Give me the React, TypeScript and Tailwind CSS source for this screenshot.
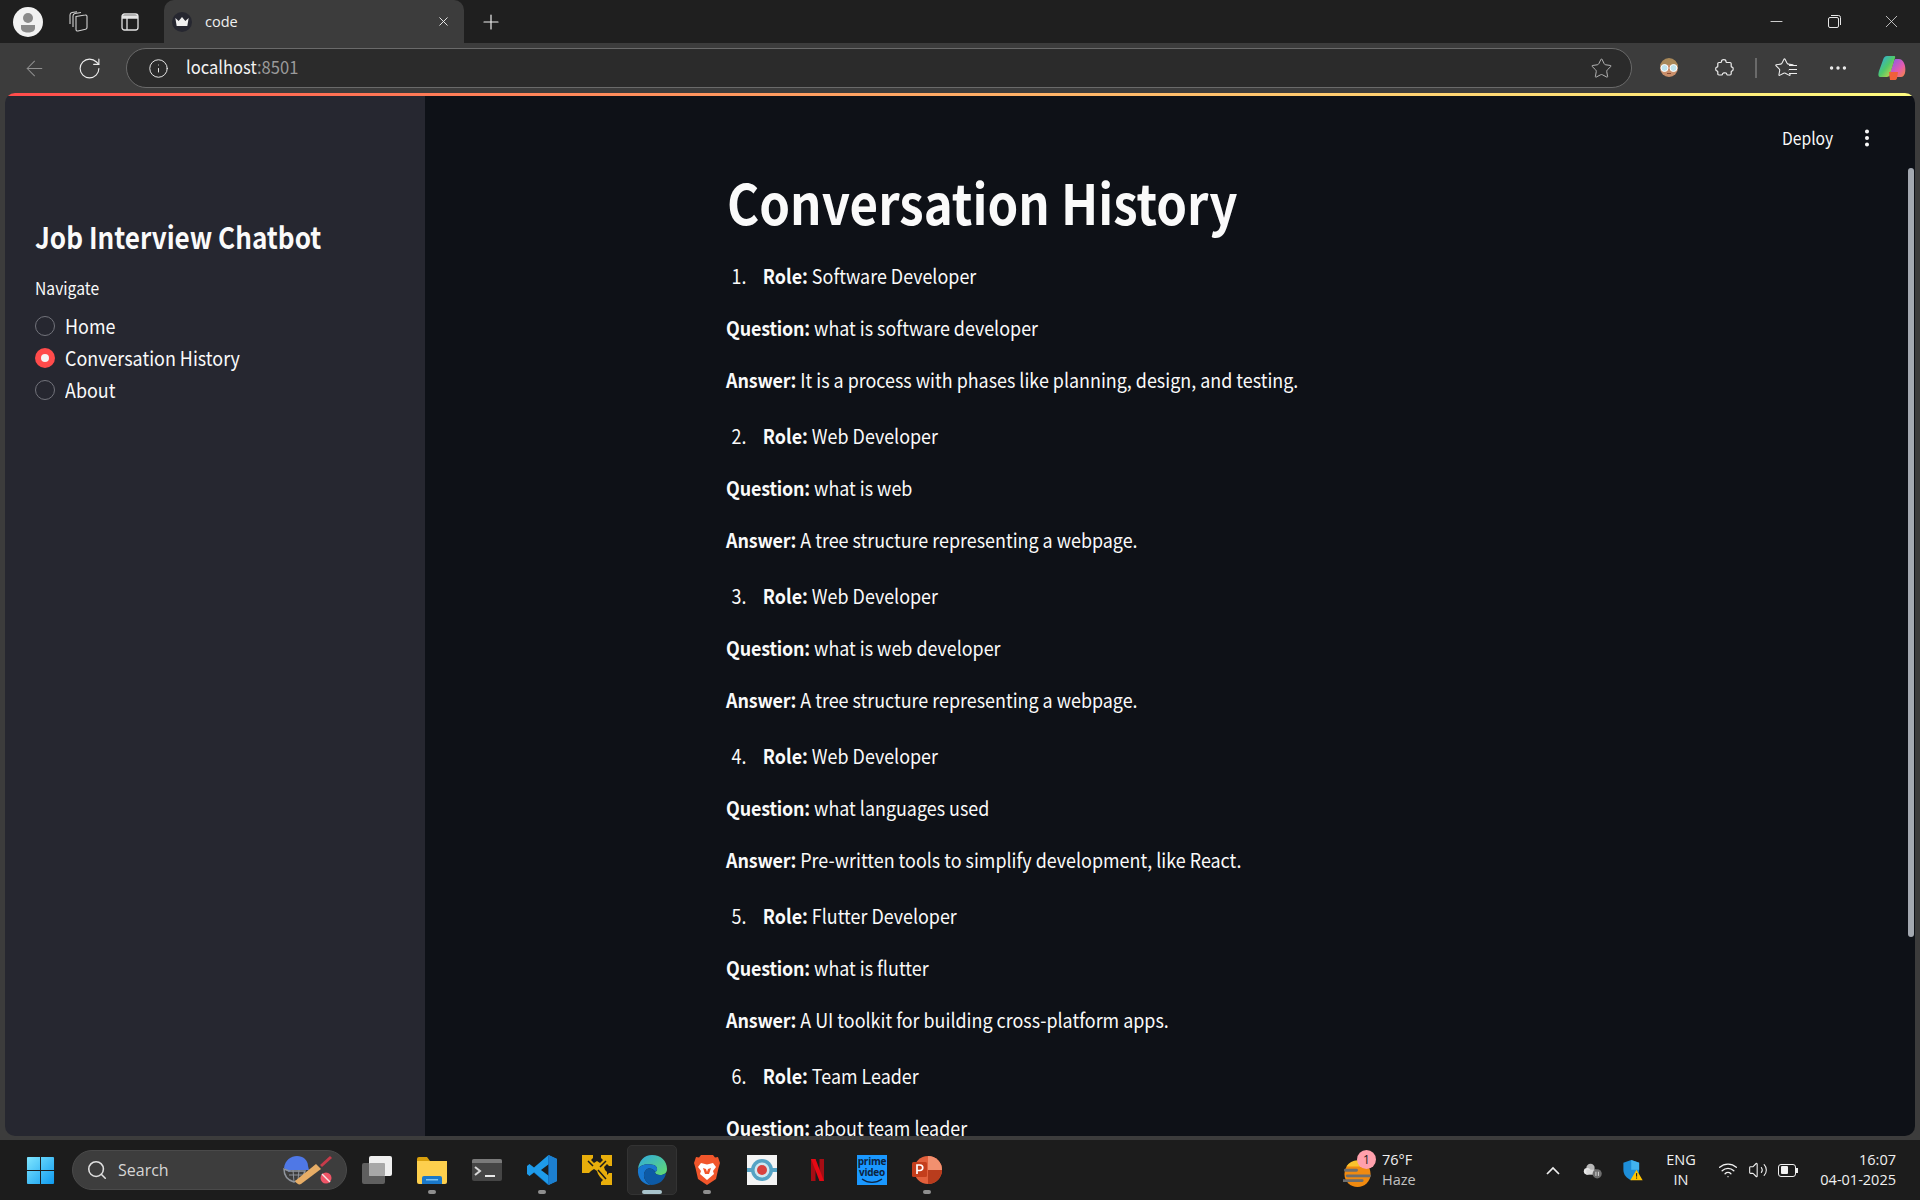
import { ArrowLeft, Info, Minus, MoreHorizontal, Plus, RotateCw, Search, Star, Volume2, Wifi, X, EllipsisVertical } from "lucide-react";

const sans = "font-['Noto_Sans_CJK_SC','Noto_Sans',sans-serif]";
const ui = "font-['Open_Sans','Noto_Sans',sans-serif]";

const history = [
  { role: "Software Developer", question: "what is software developer", answer: "It is a process with phases like planning, design, and testing." },
  { role: "Web Developer", question: "what is web", answer: "A tree structure representing a webpage." },
  { role: "Web Developer", question: "what is web developer", answer: "A tree structure representing a webpage." },
  { role: "Web Developer", question: "what languages used", answer: "Pre-written tools to simplify development, like React." },
  { role: "Flutter Developer", question: "what is flutter", answer: "A UI toolkit for building cross-platform apps." },
  { role: "Team Leader", question: "about team leader", answer: "" },
];

const navItems = ["Home", "Conversation History", "About"];

function TabStrip() {
  return (
    <div className="h-[43px] shrink-0 bg-[#1f1f1f] flex items-center">
      <div className="w-[56px] flex justify-center">
        {/* profile */}
        <svg width="30" height="30" viewBox="0 0 30 30">
          <circle cx="15" cy="15" r="15" fill="#f2f2f2" />
          <circle cx="15" cy="11" r="5" fill="#8a8a8a" />
          <path d="M8 18h14v3c0 3-3 4.500-7 4.500S8 24 8 21z" fill="#8a8a8a" />
        </svg>
      </div>
      <div className="w-[42px] flex justify-center">
        <svg width="21" height="21" viewBox="0 0 21 21" fill="none" stroke="#d0d0d0" strokeWidth="1.100">
          <path d="M9 5.500l9-1.500c1-.2 2 .5 2 1.500v11c0 1-.5 1.500-1.500 1.800L11 20c-1 .2-2-.5-2-1.500z" />
          <path d="M6 16V5c0-1.500 1-2.300 2-2.500l6-1M3 13V4c0-1.500 1-2.300 2-2.500L10 .8" />
        </svg>
      </div>
      <div className="w-[64px] flex justify-center">
        <svg width="18" height="18" viewBox="0 0 18 18" fill="none" stroke="#e4e4e4" strokeWidth="1.300">
          <rect x="1" y="1" width="16" height="16" rx="2.500" />
          <path d="M1 4h16" strokeWidth="3.500" />
          <path d="M6 5v12" />
        </svg>
      </div>
      <div className="ml-[2px] w-[300px] h-[43px] bg-[#3c3c3c] rounded-t-[10px] flex items-center pl-[8px] pr-[13px]">
        <div className="w-[20px] h-[20px] rounded-full bg-[#262730] flex items-center justify-center shrink-0">
          <svg width="14" height="10" viewBox="0 0 12 9" fill="#f0f0f0">
            <path d="M0 1l3 2.500L6 0l3 3.500L12 1l-1.200 7H1.200z" />
          </svg>
        </div>
        <span className={`${ui} ml-[13px] text-[14.500px] text-[#f0f0f0] flex-1`}>code</span>
        <X size={15} strokeWidth={1.5} className="text-[#f0f0f0]" />
      </div>
      <div className="w-[54px] flex justify-center">
        <Plus size={24} strokeWidth={1.2} className="text-[#efefef]" />
      </div>
      <div className="flex-1" />
      <div className="flex items-center text-[#e6e6e6]">
        <div className="w-[56px] flex justify-center pr-[4px]"><Minus size={19} strokeWidth={1.1} /></div>
        <div className="w-[56px] flex justify-center">
          <svg width="13" height="13" viewBox="0 0 13 13" fill="none" stroke="#e6e6e6" strokeWidth="1">
            <rect x="0.500" y="2.500" width="10" height="10" rx="1.500" />
            <path d="M3 .5h7.500a2 2 0 0 1 2 2V10" />
          </svg>
        </div>
        <div className="w-[58px] flex justify-center"><X size={21} strokeWidth={0.9} /></div>
      </div>
    </div>
  );
}

function Toolbar() {
  return (
    <div className="h-[50px] shrink-0 bg-[#3c3c3c] flex items-center">
      <div className="w-[68px] flex justify-center">
        <ArrowLeft size={25} strokeWidth={1} className="text-[#8f8f8f]" />
      </div>
      <div className="w-[42px] flex justify-center">
        <RotateCw size={25} strokeWidth={1.1} className="text-[#ededed]" />
      </div>
      <div className="ml-[16px] w-[1506px] h-[40px] rounded-full border border-[#6a6a6a] bg-[#2b2b2b] flex items-center pl-[21px] pr-[18px]">
        <Info size={21} strokeWidth={1.1} className="text-[#ededed]" />
        <span className={`${sans} ml-[17px] -translate-y-[2px] origin-left scale-x-[0.92] text-[18px] leading-none text-[#f2f2f2]`}>
          localhost<span className="text-[#9a9a9a]">:8501</span>
        </span>
        <div className="flex-1" />
        <Star size={23} strokeWidth={1} className="text-[#b8b8b8]" />
      </div>
      {/* extension face */}
      <div className="w-[74px] flex justify-center">
        <svg width="20" height="20" viewBox="0 0 20 20">
          <circle cx="10" cy="10" r="9" fill="#c98f6b" />
          <path d="M1 9a9 9 0 0 1 18 0c-3-3-15-3-18 0z" fill="#a98858" />
          <circle cx="5.500" cy="10" r="3.500" fill="#bfe3ec" stroke="#fff" />
          <circle cx="14.500" cy="10" r="3.500" fill="#bfe3ec" stroke="#fff" />
          <path d="M8 15.500h4" stroke="#8a4a33" />
        </svg>
      </div>
      <div className="w-[36px] flex justify-center">
        <svg width="20" height="20" viewBox="0 0 20 20" fill="none" stroke="#ededed" strokeWidth="1.200">
          <path d="M7.500 3.500C7.500 1 12 1 12 3.500c0 .8.300 1 1 1h3c.8 0 1.200.4 1.200 1.200v2.500c0 .7.500 1 1 1 1.300.2 1.300 3.500 0 3.600-.5 0-1 .3-1 1v2c0 .8-.4 1.200-1.200 1.200h-2.500c-1 0-.5-1.500-1.500-2-1-.5-3.500 0-3.500 1 0 .6-.5 1-1 1H5c-.8 0-1.200-.4-1.200-1.200v-2c0-.8-.5-1-1-1-1.500-.2-1.500-3.400 0-3.600.5 0 1-.3 1-1V5.700c0-.8.400-1.200 1.200-1.200h1.500c.7 0 1-.2 1-1z" />
        </svg>
      </div>
      <div className="ml-[13px] w-[2px] h-[20px] bg-[#6a6a6a]" />
      <div className="w-[55px] flex justify-center">
        <div className="relative w-[22px] h-[22px]">
          <Star size={21} strokeWidth={1.200} className="text-[#ededed]" />
          <div className="absolute right-[-1px] top-[8px] w-[8px] h-[9px] border-y border-[#ededed] bg-[#3c3c3c]" />
          <div className="absolute right-[-1px] top-[12px] w-[8px] h-px bg-[#ededed]" />
        </div>
      </div>
      <div className="w-[52px] flex justify-center">
        <MoreHorizontal size={22} strokeWidth={1.700} className="text-[#ededed]" />
      </div>
      <div className="w-[56px] flex justify-center">
        <svg width="28" height="26" viewBox="0 0 28 26">
          <defs>
            <linearGradient id="copA" x1="0" y1="0" x2="1" y2="1">
              <stop offset="0" stopColor="#2aa6f5" />
              <stop offset="0.5" stopColor="#4fc96a" />
              <stop offset="1" stopColor="#f5d33f" />
            </linearGradient>
            <linearGradient id="copB" x1="0" y1="0" x2="1" y2="1">
              <stop offset="0" stopColor="#7b5cf0" />
              <stop offset="0.6" stopColor="#e45bb0" />
              <stop offset="1" stopColor="#f7893b" />
            </linearGradient>
          </defs>
          <path d="M18 4h3c3 0 5 3 6 7 1 5 0 11-4 11H13c-2 0-2-2-1-4l4-12c.5-1.500 1-2 2-2z" fill="url(#copB)" />
          <path d="M9 1h7c2 0 1 2 0 5l-4 13c-1 3-2 3-5 3H3C0 22 0 20 1 16L5 5c1-3 2-4 4-4z" fill="url(#copA)" />
          <path d="M11 17h9l-1 6c-.3 1.500-1 2-2.500 2H12z" fill="#f0603a" />
        </svg>
      </div>
    </div>
  );
}

function Sidebar() {
  return (
    <aside className={`${sans} w-[420px] shrink-0 bg-[#262730] pl-[30px] pt-[118px] text-[#fafafa]`}>
      <h2 className="origin-left scale-x-[0.87] text-[30px] leading-[44px] font-semibold whitespace-nowrap">Job Interview Chatbot</h2>
      <p className="origin-left scale-x-[0.895] mt-[17px] text-[17.500px] leading-[26px]">Navigate</p>
      <div className="mt-[15px] flex flex-col gap-[12px]">
        {navItems.map((item) => {
          const active = item === "Conversation History";
          return (
            <div key={item} className="flex items-center h-[20px] gap-[10px]">
              {active ? (
                <div className="w-[20px] h-[20px] rounded-full bg-[#ff4b4b] flex items-center justify-center">
                  <div className="w-[8px] h-[8px] rounded-full bg-[#f5f5f5]" />
                </div>
              ) : (
                <div className="w-[20px] h-[20px] rounded-full border border-[#72737b]" />
              )}
              <span className="origin-left scale-x-[0.895] text-[20px] leading-[20px]">{item}</span>
            </div>
          );
        })}
      </div>
    </aside>
  );
}

function Main() {
  return (
    <main className={`${sans} relative flex-1 overflow-hidden bg-[#0e1117] text-[#fafafa]`}>
      <div className="absolute right-[82px] top-[29px] origin-right scale-x-[0.895] text-[17.500px] leading-[26px]">Deploy</div>
      <EllipsisVertical size={22} strokeWidth={2.400} className="absolute right-[37px] top-[31px]" />
      <div className="absolute right-px top-[72px] w-[6px] h-[769px] rounded-full bg-[#a3a8b0]" />

      <div className="pl-[302px] pt-[70px]">
        <div className="origin-left scale-x-[0.895] whitespace-nowrap">
          <h1 className="text-[55px] leading-[70px] font-bold">Conversation History</h1>
          <ol className="mt-[24px] -ml-px text-[20px] leading-[32px]">
            {history.map((item, i) => (
              <li key={i} className="mb-[24px]">
                <div className="flex">
                  <span className="w-[41px] pl-[6px]">{i + 1}.</span>
                  <p><strong className="font-semibold">Role:</strong> {item.role}</p>
                </div>
                <p className="mt-[20px]"><strong className="font-semibold tracking-[-0.2px]">Question:</strong> {item.question}</p>
                {item.answer && (
                  <p className="mt-[20px]"><strong className="font-semibold tracking-[-0.2px]">Answer:</strong> {item.answer}</p>
                )}
              </li>
            ))}
          </ol>
        </div>
      </div>
    </main>
  );
}

function TaskIcon({ dot, active, children }: { dot?: boolean; active?: boolean; children: React.ReactNode }) {
  return (
    <div className="relative w-[55px] h-[50px] flex items-center justify-center">
      {active && <div className="absolute inset-y-0 left-[2.500px] right-[2.500px] rounded-[5px] bg-[#292929] border border-[#333333]" />}
      <div className="relative flex items-center justify-center">{children}</div>
      {dot && <div className="absolute bottom-px left-1/2 -translate-x-1/2 w-[8px] h-[4px] rounded-full bg-[#8f8f8f]" />}
      {active && <div className="absolute bottom-px left-1/2 -translate-x-1/2 w-[20px] h-[4px] rounded-full bg-[#a9c4cc]" />}
    </div>
  );
}

function Taskbar() {
  return (
    <div className={`${ui} h-[60px] shrink-0 bg-[#1c1c1c] flex items-center text-[#f0f0f0]`}>
      <div className="w-[72px] flex justify-center pl-[8px]">
        <svg width="29" height="29" viewBox="0 0 30 30">
          <defs>
            <linearGradient id="win" x1="0" y1="0" x2="1" y2="1">
              <stop offset="0" stopColor="#7fe6ff" />
              <stop offset="1" stopColor="#0f9bf0" />
            </linearGradient>
          </defs>
          <path d="M1 2a1 1 0 0 1 1-1h12.500v13.500H1zM15.500 1H28a1 1 0 0 1 1 1v12.500H15.500zM1 15.500h13.500V29H2a1 1 0 0 1-1-1zM15.500 15.500H29V28a1 1 0 0 1-1 1H15.500z" fill="url(#win)" />
        </svg>
      </div>
      <div className="w-[275px] h-[40px] rounded-full bg-[#3d3d3d] border border-[#4a4a4a] flex items-center pl-[13px] pr-[13px]">
        <Search size={22} strokeWidth={1.700} className="text-[#e0e0e0]" />
        <span className="ml-[10px] text-[16px] text-[#d6d6d6]">Search</span>
        <div className="flex-1" />
        <svg width="50" height="30" viewBox="0 0 50 30">
          <path d="M1 13C2 5 8 1 14 1s11 4 11 10l1 4H8l-2 2z" fill="#4f78e6" />
          <path d="M1 14c0 6 3 11 10 13l8-3 3-8H6z" fill="none" stroke="#8f949c" strokeWidth="1.500" />
          <path d="M6 20h14M10 15l1 12M16 15l-1 10" stroke="#8f949c" strokeWidth="1" />
          <path d="M12 26l21-17 5 5-20 15c-2 1-4 0-6-3z" fill="#e7ad66" />
          <path d="M37 10l10-9 2 2-10 9z" fill="#c73b4a" />
          <circle cx="43" cy="23" r="5.500" fill="#ef5567" />
          <path d="M39 19l8 8" stroke="#f6e6e6" strokeWidth="1.500" />
        </svg>
      </div>
      <div className="ml-[2.500px] flex items-center">
        <TaskIcon>
          <svg width="30" height="28" viewBox="0 0 30 28">
            <rect x="0" y="7" width="23" height="21" rx="2" fill="#5f5f5f" />
            <rect x="7" y="0" width="23" height="20" rx="2" fill="#efefef" />
            <rect x="7" y="7" width="16" height="13" rx="1" fill="#a8a8a8" />
          </svg>
        </TaskIcon>
        <TaskIcon dot>
          <svg width="30" height="27" viewBox="0 0 30 27">
            <path d="M0 2a2 2 0 0 1 2-2h8l3 4H0z" fill="#d89f0c" />
            <path d="M0 4h30v21a2 2 0 0 1-2 2H2a2 2 0 0 1-2-2z" fill="#fdcf4d" />
            <path d="M5 21a2 2 0 0 1 2-2h16a2 2 0 0 1 2 2v6H5z" fill="#1a78c9" />
            <rect x="9" y="22" width="12" height="1.500" fill="#7ec4f3" />
          </svg>
        </TaskIcon>
        <TaskIcon>
          <svg width="30" height="22" viewBox="0 0 30 22">
            <rect width="30" height="22" rx="2" fill="#454545" />
            <path d="M0 2a2 2 0 0 1 2-2h26a2 2 0 0 1 2 2v2H0z" fill="#7a7a7a" />
            <path d="M3 8l5 4-5 4" fill="none" stroke="#d8d8d8" strokeWidth="2" />
            <rect x="13" y="16" width="10" height="2" fill="#e8e8e8" />
          </svg>
        </TaskIcon>
        <TaskIcon dot>
          <svg width="30" height="30" viewBox="0 0 30 30">
            <path d="M21.500 0L30 4v22l-8.500 4L7 17.500 2.500 21 0 19V11l2.500-2L7 12.500zM22 9l-8 6 8 6z" fill="#1e9bea" />
            <path d="M21.500 0L30 4v22l-8.500 4z" fill="#1c7fd0" />
            <path d="M21.500 0v30L7 17.500" fill="none" stroke="#0e5fa8" strokeWidth="0.500" />
          </svg>
        </TaskIcon>
        <TaskIcon>
          <svg width="30" height="30" viewBox="0 0 30 30" fill="#e8ae0b">
            <path d="M0 0h11v3L9 5l3 3 3-2 3 2 3-3-2-2V0h11v11h-3l-2-2-3 3 1 3 2 2v3l2-2h3v12H19v-3l2-2-3-3-2-3-1-3-3-2-3 2-2 2H0z" />
            <path d="M6 6l5 5M24 6l-6 6M16 15l8 9" stroke="#1c1c1c" strokeWidth="1.500" />
          </svg>
        </TaskIcon>
        <TaskIcon active>
          <svg width="30" height="30" viewBox="0 0 30 30">
            <defs>
              <linearGradient id="edgeA" x1="0" y1="0" x2="1" y2="1">
                <stop offset="0" stopColor="#2fa8e0" />
                <stop offset="1" stopColor="#62dc6e" />
              </linearGradient>
            </defs>
            <path d="M15 0c9 0 15 6 15 14 0 4-3 6-7 6-3 0-5-1-5-3 3-1 3-5-1-7C10 8 3 10 1 14 2 6 7 0 15 0z" fill="url(#edgeA)" />
            <path d="M1 14c2-4 9-6 16-4 4 2 4 6 1 7-1-3-6-5-9-2-4 4-2 12 5 15C6 30 0 23 1 14z" fill="#1878d0" />
            <path d="M9 15c3-3 8-1 9 2 0 2 2 3 5 3 2 0 4-.5 6-2-1 7-7 12-15 12-7-3-9-11-5-15z" fill="#0d5aa6" />
          </svg>
        </TaskIcon>
        <TaskIcon dot>
          <svg width="26" height="30" viewBox="0 0 26 30">
            <path d="M7 0h12l2 2.500 3-.5 2 6-1.500 5L22 24l-9 6-9-6L1.500 13 0 8l2-6 3 .5z" fill="#f1562b" />
            <path d="M7 8l6 1.500L19 8l3 4-3 4 1 3-7 6-7-6 1-3-3-4z" fill="#ffffff" />
            <path d="M9 13l3 1 1 3 1-3 3-1-2 6h-4z" fill="#f1562b" />
          </svg>
        </TaskIcon>
        <TaskIcon>
          <svg width="30" height="30" viewBox="0 0 30 30">
            <rect width="30" height="30" fill="#f4f4f4" />
            <path d="M0 13h30v4H0z" fill="#55a3c5" />
            <circle cx="15" cy="15" r="11" fill="#55a3c5" />
            <circle cx="15" cy="15" r="7.500" fill="#cfe7f0" />
            <circle cx="15" cy="15" r="5" fill="#d8423f" />
          </svg>
        </TaskIcon>
        <TaskIcon>
          <svg width="13" height="22" viewBox="0 0 13 22">
            <path d="M0 0h4.500v22H0z" fill="#a50d14" />
            <path d="M8.500 0H13v22H8.500z" fill="#a50d14" />
            <path d="M0 0h4.500L13 22H8.500z" fill="#e50914" />
          </svg>
        </TaskIcon>
        <TaskIcon>
          <div className="w-[30px] h-[30px] bg-[#1a98ff] flex flex-col items-center pt-[1px] text-[#0c2340] font-bold text-[10px] leading-[11px] tracking-[-0.2px]">
            <span>prime</span>
            <span>video</span>
            <svg width="22" height="6" viewBox="0 0 22 6">
              <path d="M1 1c6 4.500 14 4.500 20 0" fill="none" stroke="#0c2340" strokeWidth="1.300" />
            </svg>
          </div>
        </TaskIcon>
        <TaskIcon dot>
          <svg width="30" height="30" viewBox="0 0 30 30">
            <circle cx="16" cy="15" r="14" fill="#e2603c" />
            <path d="M16 1a14 14 0 0 1 14 14H16z" fill="#f2906f" />
            <path d="M16 15h14a14 14 0 0 1-14 14z" fill="#b93c1d" />
            <rect x="0" y="7" width="15" height="15" rx="1.500" fill="#c43e1c" />
            <path d="M5 19V10h3a2.500 2.500 0 0 1 0 5.500H5" fill="none" stroke="#fff" strokeWidth="1.700" />
          </svg>
        </TaskIcon>
      </div>
      <div className="flex-1" />
      {/* weather */}
      <div className="relative w-[29px] h-[28px] mt-[8px]">
        <svg width="29" height="28" viewBox="0 0 30 30">
          <circle cx="15" cy="15" r="14" fill="#f08a10" />
          <path d="M3 7a14 14 0 0 1 24 0z" fill="#f9c22d" />
          <path d="M2 11h12M4 17h24M0 22h20" stroke="#6e6e6e" strokeWidth="3" strokeLinecap="round" />
        </svg>
        <div className="absolute left-[14px] -top-[10px] w-[19px] h-[19px] rounded-full bg-[#ffa0ac] text-[#1c1c1c] text-[12px] leading-[19px] text-center">1</div>
      </div>
      <div className="ml-[10px] w-[164px] flex flex-col text-[14.500px] leading-[20px]">
        <span>76°F</span>
        <span className="text-[#c2c2c2]">Haze</span>
      </div>
      <svg width="14" height="9" viewBox="0 0 14 9" fill="none" stroke="#eeeeee" strokeWidth="1.700">
        <path d="M1 8l6-6 6 6" />
      </svg>
      <div className="ml-[23px] w-[20px]">
        <svg width="20" height="17" viewBox="0 0 24 20">
          <circle cx="9" cy="7" r="5" fill="#b8b8b8" />
          <circle cx="5" cy="11" r="4" fill="#e8e8e8" />
          <rect x="4" y="9" width="12" height="6" fill="#d8d8d8" />
          <circle cx="17" cy="14" r="5.500" fill="#6e6e6e" />
          <path d="M15.500 11.500v5M18.500 11.500v5" stroke="#e8e8e8" />
        </svg>
      </div>
      <div className="ml-[20px] w-[20px]">
        <svg width="20" height="21" viewBox="0 0 22 24">
          <path d="M9 0l9 3v8c0 6-4 10-9 12-5-2-9-6-9-12V3z" fill="#1e8ed8" />
          <path d="M9 0l9 3v8H9z" fill="#42b4f0" />
          <path d="M15 11l7 12H8z" fill="#ffc400" />
          <rect x="14.500" y="15" width="1.200" height="4" fill="#1c1c1c" />
          <rect x="14.500" y="20" width="1.200" height="1.300" fill="#1c1c1c" />
        </svg>
      </div>
      <div className="ml-[23px] w-[30px] flex flex-col items-center text-[14.500px] leading-[20px]">
        <span>ENG</span>
        <span>IN</span>
      </div>
      <Wifi size={20} strokeWidth={1.600} className="ml-[22px] text-[#f0f0f0]" />
      <Volume2 size={20} strokeWidth={1.300} className="ml-[10px] text-[#f0f0f0]" />
      <div className="ml-[10px] w-[18px] h-[13px] rounded-[3px] border border-[#f0f0f0] p-[1.500px] relative mr-[2px]">
        <div className="w-[7px] h-full bg-[#f0f0f0] rounded-[1px]" />
        <div className="absolute -right-[3px] top-[3px] w-[2px] h-[5px] bg-[#f0f0f0]" />
      </div>
      <div className="ml-[21px] mr-[24px] w-[77px] flex flex-col items-end text-[14.500px] leading-[20px] whitespace-nowrap">
        <span>16:07</span>
        <span>04-01-2025</span>
      </div>
    </div>
  );
}

export default function App() {
  return (
    <div className="w-[1920px] h-[1200px] flex flex-col overflow-hidden bg-[#3c3c3c]">
      <TabStrip />
      <Toolbar />
      <div className="flex-1 min-h-0 flex flex-col px-[5px] pb-[4px]">
        <div className="flex-1 min-h-0 rounded-[10px] overflow-hidden flex flex-col">
          <div className="h-[3px] shrink-0 bg-linear-to-r from-[#ff4b4b] to-[#fffd80]" />
          <div className="flex-1 min-h-0 flex">
            <Sidebar />
            <Main />
          </div>
        </div>
      </div>
      <Taskbar />
    </div>
  );
}
